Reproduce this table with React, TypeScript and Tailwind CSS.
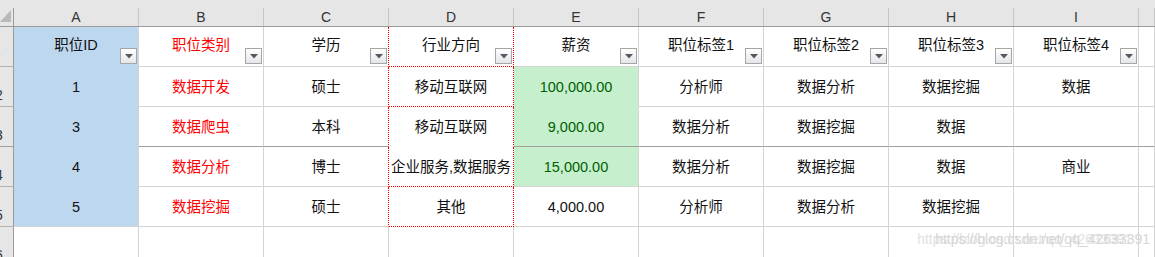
const cols = ["A", "B", "C", "D", "E", "F", "G", "H", "I"];

const rows: string[][] = [
  ["职位ID", "职位类别", "学历", "行业方向", "薪资", "职位标签1", "职位标签2", "职位标签3", "职位标签4"],
  ["1", "数据开发", "硕士", "移动互联网", "100,000.00", "分析师", "数据分析", "数据挖掘", "数据"],
  ["3", "数据爬虫", "本科", "移动互联网", "9,000.00", "数据分析", "数据挖掘", "数据", ""],
  ["4", "数据分析", "博士", "企业服务,数据服务", "15,000.00", "数据分析", "数据挖掘", "数据", "商业"],
  ["5", "数据挖掘", "硕士", "其他", "4,000.00", "分析师", "数据分析", "数据挖掘", ""],
  ["", "", "", "", "", "", "", "", ""],
];

function bottomBorder(r: number, c: number) {
  if (c === 0 && r <= 3) return "border-b-[#bdd7ee]";
  if (c === 3) {
    if (r === 2) return "border-b-white";
    if (r <= 4) return "border-b-[#ff0000] [border-bottom-style:dotted]";
  }
  if (r === 2) return "border-b-[#a0a0a0]";
  if (c === 4 && r === 1) return "border-b-[#c6efce]";
  return "border-b-[#d4d4d4]";
}

function rightBorder(r: number, c: number) {
  if ((c === 2 || c === 3) && r <= 4) return "border-r-[#ff0000] [border-right-style:dotted]";
  return "border-r-[#d4d4d4]";
}

function bg(r: number, c: number) {
  if (c === 0 && r <= 4) return "bg-[#bdd7ee]";
  if (c === 4 && r >= 1 && r <= 3) return "bg-[#c6efce]";
  return "bg-white";
}

function textColor(r: number, c: number) {
  if (c === 1 && r <= 4) return "text-[#ff0000]";
  if (c === 4 && r >= 1 && r <= 3) return "text-[#006100]";
  return "text-[#111]";
}

function FilterButton() {
  return (
    <div className="absolute bottom-[2px] right-[1px] flex h-[16px] w-[17px] items-center justify-center border border-[#a6a6a6] bg-gradient-to-b from-white to-[#e4e6ea]">
      <svg width="8" height="5" viewBox="0 0 8 5">
        <path d="M0 0 L8 0 L4 4.5 Z" fill="#555a60" />
      </svg>
    </div>
  );
}

export default function App() {
  return (
    <div className="relative h-[257px] w-[1155px] overflow-hidden bg-white font-['Liberation_Sans','Noto_Sans_CJK_SC',sans-serif] text-[14.5px]">
      <div className="grid grid-cols-[14px_repeat(9,125px)_1fr]">
        {/* column letters */}
        <div className="h-[27px] border-b border-[#9b9b9b] bg-[#e6e6e6] pt-[8px]">
          <div className="relative h-full border-r border-[#9b9b9b]">
            <svg className="absolute left-0 top-[2px]" width="11" height="12" viewBox="0 0 11 12">
              <path d="M11 0 L11 12 L0 12 Z" fill="#b9b9b9" />
            </svg>
          </div>
        </div>
        {cols.map((c) => (
          <div key={c} className="h-[27px] border-b border-[#9b9b9b] bg-[#e6e6e6] pt-[8px]">
            <div className="flex h-full items-center justify-center border-r border-[#c6c6c6] text-[14px] text-[#333]">
              {c}
            </div>
          </div>
        ))}
        <div className="h-[27px] border-b border-[#9b9b9b] bg-[#e6e6e6] pt-[8px]">
          <div className="h-full border-r border-[#c6c6c6]" />
        </div>

        {rows.map((row, r) => (
          <div key={r} className="contents">
            <div
              className={`flex h-[40px] items-end overflow-hidden border-r border-b border-r-[#9b9b9b] bg-[#e6e6e6] pb-[4px] text-[14px] leading-none ${
                r === 2 ? "border-b-[#a0a0a0]" : "border-b-[#b4b4b4]"
              } ${r === 0 ? "text-[#6fe6e6]" : "text-[#333]"}`}
            >
              <span className={r === 0 ? "mb-[4px] ml-[-7px]" : "ml-[-5px]"}>{r + 1}</span>
            </div>
            {row.map((v, c) => (
              <div
                key={c}
                className={`relative flex h-[40px] items-center justify-center whitespace-nowrap border-r border-b pt-[2px] ${bottomBorder(
                  r,
                  c
                )} ${rightBorder(r, c)} ${bg(r, c)} ${textColor(r, c)} ${r === 0 ? "pb-[4px]" : ""}`}
              >
                {v}
                {r === 0 && <FilterButton />}
              </div>
            ))}
            <div
              className={`h-[40px] border-r border-b border-r-[#d4d4d4] bg-white ${
                r === 2 ? "border-b-[#a0a0a0]" : "border-b-[#d4d4d4]"
              }`}
            />
          </div>
        ))}
      </div>

      {/* csdn watermark */}
      <div className="pointer-events-none absolute bottom-[11px] right-[5px] text-[14px] leading-none text-[#d6d6d6]">
        <span className="absolute right-[18px] top-0 text-[#e2e2e2]">https://blog.csdn.net/qq_42633391</span>
        <span className="relative">https://blog.csdn.net/qq_42633391</span>
      </div>
    </div>
  );
}
